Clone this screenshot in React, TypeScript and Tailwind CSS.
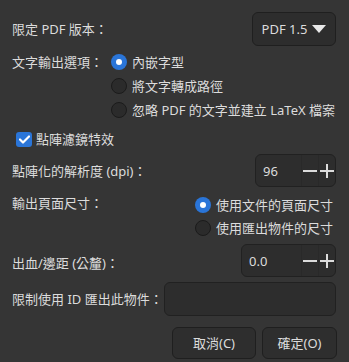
import React from "react";

const Radio: React.FC<{ checked?: boolean; label: string }> = ({ checked, label }) => (
  <div className="flex items-center h-[24px] gap-[5px]">
    {checked ? (
      <span className="w-[16px] h-[16px] rounded-full bg-[#2a75d8] flex items-center justify-center">
        <span className="w-[6px] h-[6px] rounded-full bg-white" />
      </span>
    ) : (
      <span className="w-[16px] h-[16px] rounded-full bg-[#2b2b2b] border border-[#1b1b1b]" />
    )}
    <span>{label}</span>
  </div>
);

const SpinBox: React.FC<{ value: string; width: string }> = ({ value, width }) => (
  <div
    className={`${width} h-[33px] flex rounded-md bg-[#2d2d2d] border border-[#212121] overflow-hidden`}
  >
    <div className="flex-1 flex items-center pl-[7px]">{value}</div>
    <div className="w-[17px] flex items-center justify-center border-l border-[#292929]">
      <span className="block w-[14px] h-[2px] bg-[#dcdcdc]" />
    </div>
    <div className="w-[17px] flex items-center justify-center border-l border-[#292929] relative">
      <span className="block w-[14px] h-[2px] bg-[#dcdcdc]" />
      <span className="absolute block w-[2px] h-[14px] bg-[#dcdcdc]" />
    </div>
  </div>
);

const App: React.FC = () => {
  return (
    <div
      className="w-[349px] h-[362px] bg-[#353535] text-[#dcdcdc] text-[13px] leading-[16px] pl-[12px] pr-[13px] overflow-hidden"
      style={{ fontFamily: '"Noto Sans", "Noto Sans CJK TC", sans-serif' }}
    >
      {/* PDF version */}
      <div className="flex items-center justify-between h-[34px] mt-[12px]">
        <span>限定 PDF 版本：</span>
        <div className="w-[84px] h-[34px] rounded-md border border-[#1f1f1f] bg-[#2d2d2d] flex items-center justify-center gap-[5px]">
          <span>PDF 1.5</span>
          <svg width="14" height="8" viewBox="0 0 14 8">
            <path d="M0 0 H14 L7 8 Z" fill="#e8e8e8" />
          </svg>
        </div>
      </div>

      {/* Text output */}
      <div className="flex mt-[4px]">
        <div className="w-[99px] h-[24px] flex items-center">文字輸出選項：</div>
        <div className="flex flex-col">
          <Radio checked label="內嵌字型" />
          <Radio label="將文字轉成路徑" />
          <Radio label="忽略 PDF 的文字並建立 LaTeX 檔案" />
        </div>
      </div>

      {/* Rasterize filter */}
      <div className="flex items-center h-[24px] mt-[5px] pl-[4px] gap-[4px]">
        <span className="w-[16px] h-[15px] rounded-[3px] bg-[#2a75d8] flex items-center justify-center">
          <svg width="11" height="9" viewBox="0 0 11 9">
            <path d="M1 4.5 L4 7.5 L10 1.5" stroke="#fff" strokeWidth="2.2" fill="none" strokeLinecap="round" strokeLinejoin="round" />
          </svg>
        </span>
        <span>點陣濾鏡特效</span>
      </div>

      {/* DPI */}
      <div className="flex items-center justify-between mt-[3px]">
        <span>點陣化的解析度 (dpi)：</span>
        <SpinBox value="96" width="w-[81px]" />
      </div>

      {/* Page size */}
      <div className="flex justify-between mt-[6px]">
        <div className="h-[20px] flex items-center">輸出頁面尺寸：</div>
        <div className="flex flex-col pr-[3px] [&>div]:h-[23px]">
          <Radio checked label="使用文件的頁面尺寸" />
          <Radio label="使用匯出物件的尺寸" />
        </div>
      </div>

      {/* Bleed */}
      <div className="flex items-center justify-between mt-[5px]">
        <span className="pt-[4px]">出血/邊距 (公釐)：</span>
        <SpinBox value="0.0" width="w-[95px]" />
      </div>

      {/* Export ID */}
      <div className="flex items-center justify-between mt-[5px]">
        <span>限制使用 ID 匯出此物件：</span>
        <div className="w-[172px] h-[34px] rounded-md bg-[#2d2d2d] border border-[#212121]" />
      </div>

      {/* Buttons */}
      <div className="flex justify-end gap-[6px] mt-[11px] -mr-[1px]">
        <button className="w-[84px] h-[32px] rounded-md bg-[#2e2e2e] border border-[#1f1f1f] text-[#dcdcdc]">
          取消(C)
        </button>
        <button className="w-[75px] h-[32px] rounded-md bg-[#2e2e2e] border border-[#1f1f1f] text-[#dcdcdc]">
          確定(O)
        </button>
      </div>
    </div>
  );
};

export default App;
